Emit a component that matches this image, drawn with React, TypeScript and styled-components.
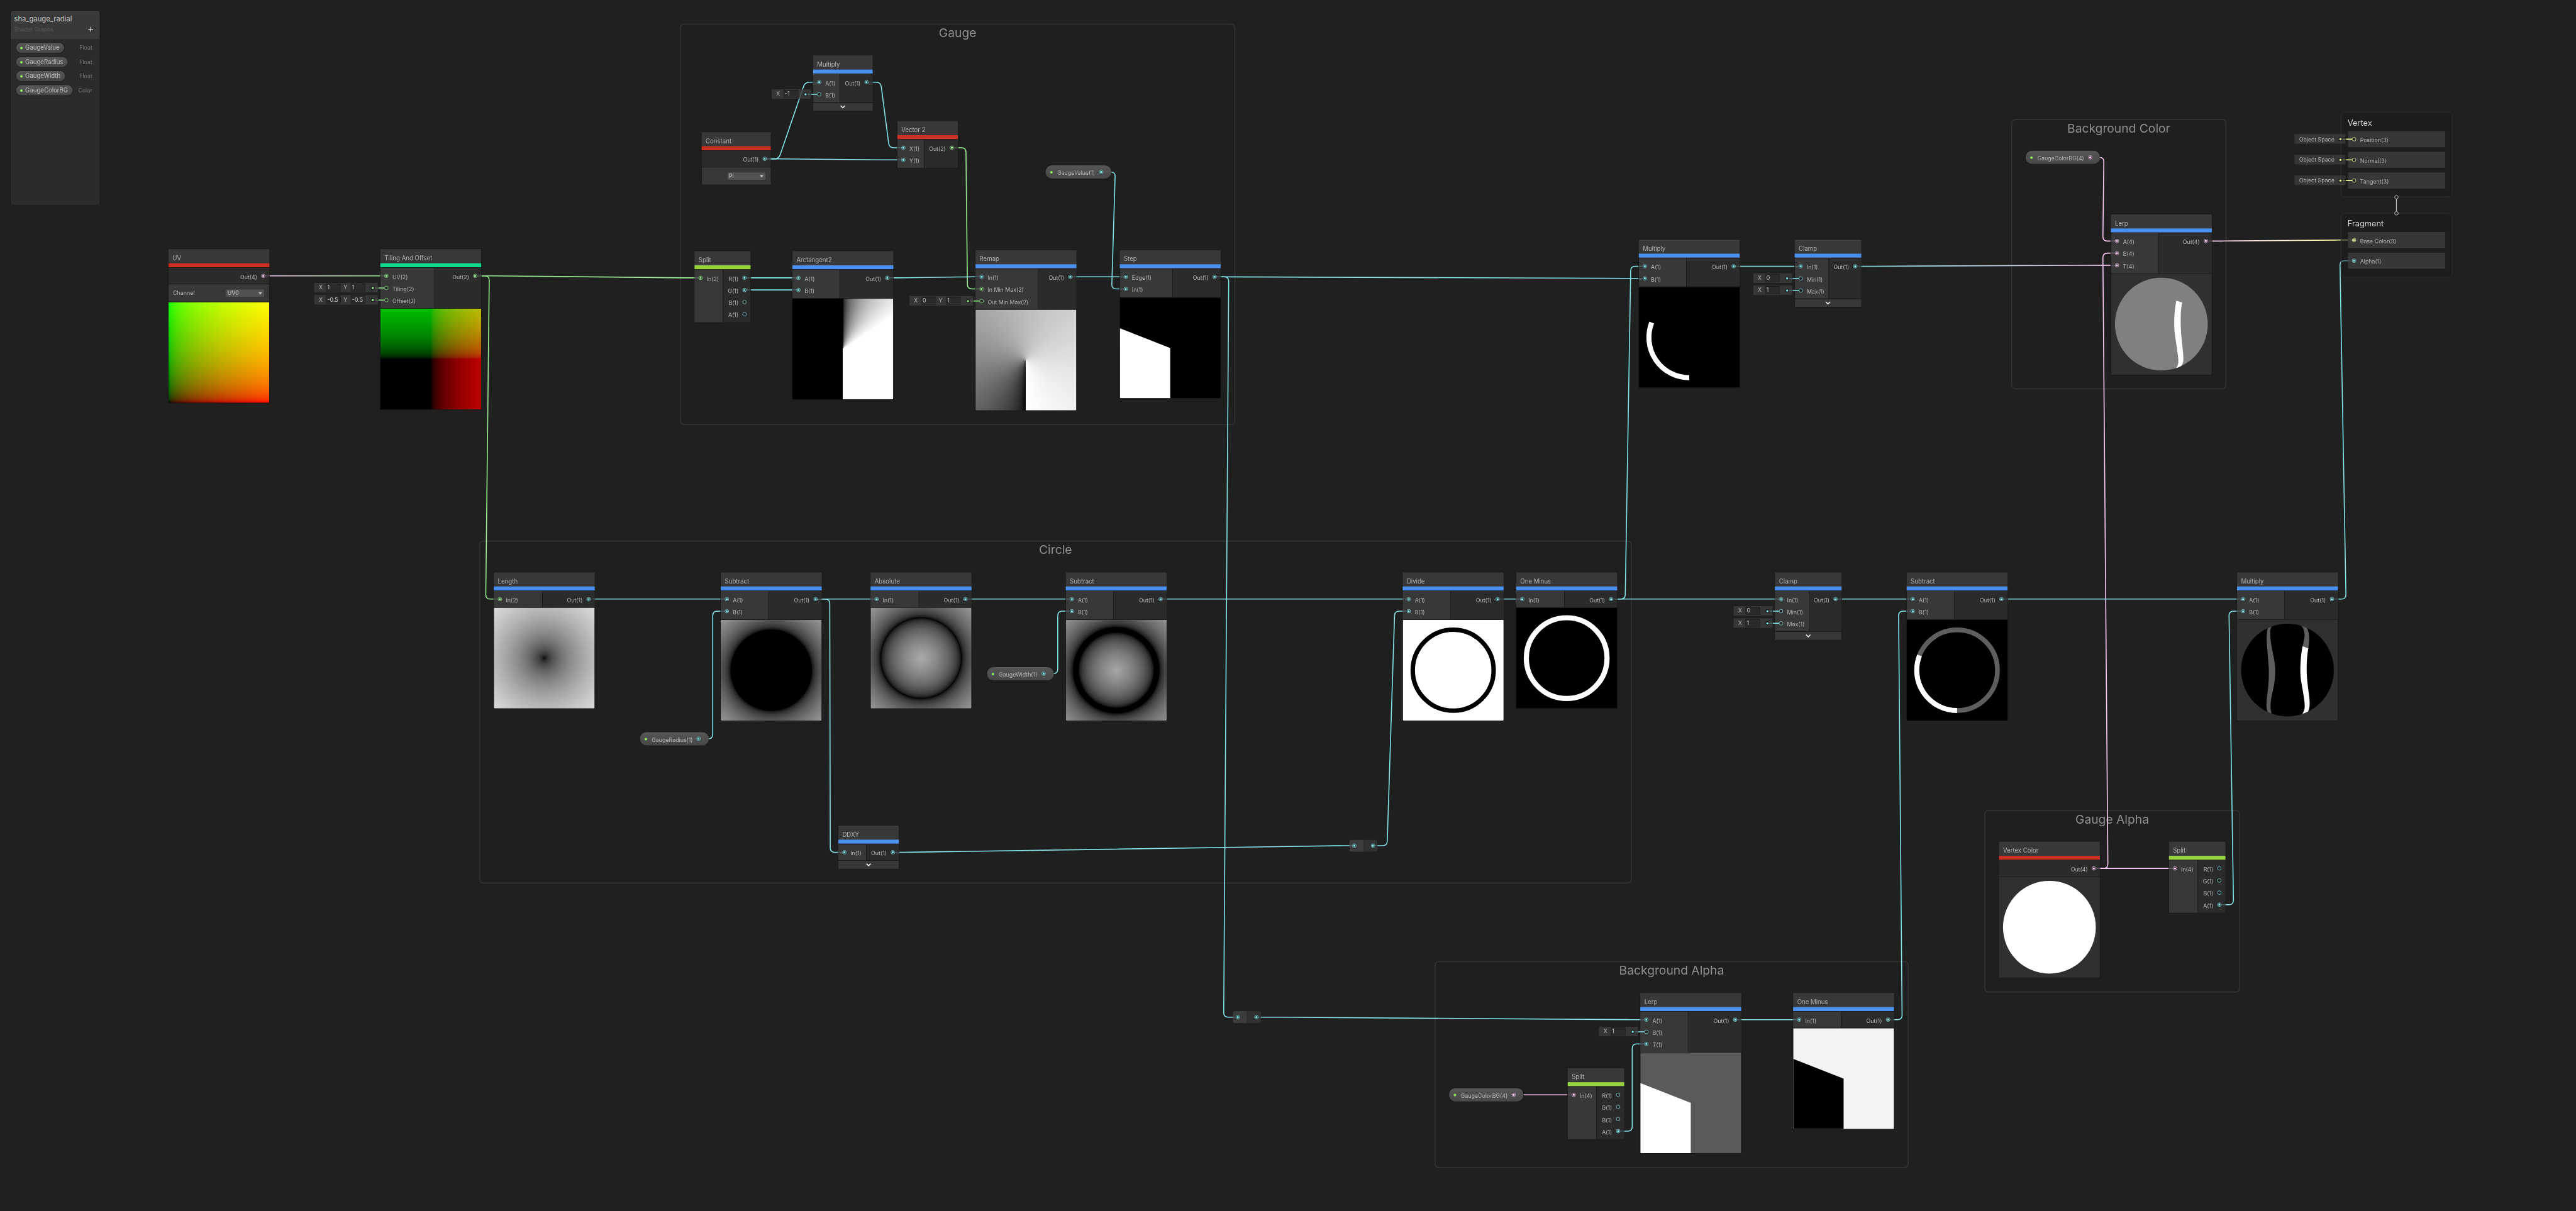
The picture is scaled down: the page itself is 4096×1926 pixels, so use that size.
import React from "react";
import styled, { createGlobalStyle } from "styled-components";

/* ------------------------------------------------------------------ */
/* Palette                                                             */
/* ------------------------------------------------------------------ */

const CYAN = "#84e4e7";
const GREEN = "#9aef92";
const PINK = "#fbcbf4";
const YELLOW = "#f6ff9a";

const BAR_BLUE = "#4a90f0";
const BAR_RED = "#cb3022";
const BAR_LIME = "#97d33d";
const BAR_TEAL = "#0cd88d";

const VIEW_ZOOM = 4096 / 5107;

/* ------------------------------------------------------------------ */
/* Shading helpers for the preview thumbnails                          */
/* ------------------------------------------------------------------ */

const encode = (v: number) => {
  const c = Math.min(1, Math.max(0, v));
  const s = c <= 0.0031308 ? c * 12.92 : 1.055 * Math.pow(c, 1 / 2.4) - 0.055;
  return Math.round(s * 255);
};

const grey = (v: number) => {
  const g = encode(v);
  return `rgb(${g},${g},${g})`;
};

const ramp = (steps: number, paint: (t: number) => string, place: (t: number) => string) =>
  Array.from({ length: steps + 1 }, (_, i) => {
    const t = Math.pow(i / steps, 1);
    return `${paint(t)} ${place(t)}`;
  }).join(",");

const percent = (t: number) => `${(t * 100).toFixed(3)}%`;

const radial = (shade: (length: number) => number) =>
  `radial-gradient(circle at center, ${ramp(
    140,
    (t) => grey(shade(t * 0.70711)),
    (t) => `${(t * 141.42).toFixed(2)}px`
  )})`;

const UV_FILL = `linear-gradient(to right, ${ramp(40, (t) => `rgb(${encode(t)},0,0)`, percent)}), linear-gradient(to top, ${ramp(
  40,
  (t) => `rgb(0,${encode(t)},0)`,
  percent
)})`;

const UV_CENTERED_FILL = `linear-gradient(to right, ${ramp(80, (t) => `rgb(${encode(t - 0.5)},0,0)`, percent)}), linear-gradient(to top, ${ramp(
  80,
  (t) => `rgb(0,${encode(t - 0.5)},0)`,
  percent
)})`;

const RAD = 180 / Math.PI;
const ATAN_FILL = `conic-gradient(from 0deg, ${ramp(40, (t) => grey(t), (t) => `${(t * RAD).toFixed(2)}deg`)}, #fff 180deg, #000 180deg, #000 360deg)`;
const REMAP_FILL = `conic-gradient(from 180deg, ${ramp(80, (t) => grey(t), (t) => `${(t * 360).toFixed(2)}deg`)})`;

const FILLS: Record<string, string> = {
  uv: UV_FILL,
  uvCentered: UV_CENTERED_FILL,
  atan: ATAN_FILL,
  remap: REMAP_FILL,
  length: radial((l) => l),
  minusRadius: radial((l) => l - 0.4),
  absolute: radial((l) => Math.abs(l - 0.4)),
  minusWidth: radial((l) => Math.abs(l - 0.4) - 0.025),
};

/* ------------------------------------------------------------------ */
/* Graph data                                                          */
/* ------------------------------------------------------------------ */

type Field = { axis: string; value: string };
type PortData = { label: string; color: string; open?: boolean; fields?: Field[] };
type NodeData = {
  x: number;
  y: number;
  w: number;
  title: string;
  bar: string;
  left?: number;
  ins?: PortData[];
  outs: PortData[];
  control?: { label?: string; value: string };
  preview?: string;
  collapsed?: boolean;
};

const c = (label: string): PortData => ({ label, color: CYAN });
const co = (label: string, fields?: Field[]): PortData => ({ label, color: CYAN, open: true, fields });
const g = (label: string): PortData => ({ label, color: GREEN });
const go = (label: string, fields?: Field[]): PortData => ({ label, color: GREEN, open: true, fields });
const p = (label: string): PortData => ({ label, color: PINK });
const X = (value: string): Field => ({ axis: "X", value });
const Y = (value: string): Field => ({ axis: "Y", value });

const NODES: NodeData[] = [
  { x: 334, y: 494, w: 200, title: "UV", bar: BAR_RED, outs: [p("Out(4)")], control: { label: "Channel", value: "UV0" }, preview: "uv" },
  {
    x: 754, y: 494, w: 200, title: "Tiling And Offset", bar: BAR_TEAL, left: 107,
    ins: [g("UV(2)"), go("Tiling(2)", [X("1"), Y("1")]), go("Offset(2)", [X("-0.5"), Y("-0.5")])],
    outs: [g("Out(2)")], preview: "uvCentered",
  },
  { x: 1612, y: 110, w: 118, title: "Multiply", bar: BAR_BLUE, left: 53, ins: [c("A(1)"), co("B(1)", [X("-1")])], outs: [c("Out(1)")], collapsed: true },
  { x: 1391, y: 262, w: 137, title: "Constant", bar: BAR_RED, outs: [c("Out(1)")], control: { value: "PI" } },
  { x: 1779, y: 240, w: 120, title: "Vector 2", bar: BAR_RED, left: 53, ins: [c("X(1)"), c("Y(1)")], outs: [g("Out(2)")] },
  { x: 1377, y: 498, w: 111, title: "Split", bar: BAR_LIME, left: 56, ins: [g("In(2)")], outs: [c("R(1)"), c("G(1)"), co("B(1)"), co("A(1)")] },
  { x: 1571, y: 498, w: 200, title: "Arctangent2", bar: BAR_BLUE, left: 94, ins: [c("A(1)"), c("B(1)")], outs: [c("Out(1)")], preview: "atan" },
  {
    x: 1934, y: 496, w: 200, title: "Remap", bar: BAR_BLUE, left: 124,
    ins: [c("In(1)"), g("In Min Max(2)"), go("Out Min Max(2)", [X("0"), Y("1")])], outs: [c("Out(1)")], preview: "remap",
  },
  { x: 2220, y: 496, w: 200, title: "Step", bar: BAR_BLUE, left: 104, ins: [c("Edge(1)"), c("In(1)")], outs: [c("Out(1)")], preview: "step" },
  { x: 3249, y: 475, w: 200, title: "Multiply", bar: BAR_BLUE, left: 94, ins: [c("A(1)"), c("B(1)")], outs: [c("Out(1)")], preview: "arc" },
  {
    x: 3558, y: 475, w: 132, title: "Clamp", bar: BAR_BLUE, left: 67,
    ins: [c("In(1)"), co("Min(1)", [X("0")]), co("Max(1)", [X("1")])], outs: [c("Out(1)")], collapsed: true,
  },
  { x: 4185, y: 425, w: 200, title: "Lerp", bar: BAR_BLUE, left: 94, ins: [p("A(4)"), p("B(4)"), p("T(4)")], outs: [p("Out(4)")], preview: "lerpSphere" },
  { x: 979, y: 1135, w: 200, title: "Length", bar: BAR_BLUE, left: 96, ins: [g("In(2)")], outs: [c("Out(1)")], preview: "length" },
  { x: 1429, y: 1135, w: 200, title: "Subtract", bar: BAR_BLUE, left: 94, ins: [c("A(1)"), c("B(1)")], outs: [c("Out(1)")], preview: "minusRadius" },
  { x: 1726, y: 1135, w: 200, title: "Absolute", bar: BAR_BLUE, left: 95, ins: [c("In(1)")], outs: [c("Out(1)")], preview: "absolute" },
  { x: 2113, y: 1135, w: 200, title: "Subtract", bar: BAR_BLUE, left: 94, ins: [c("A(1)"), c("B(1)")], outs: [c("Out(1)")], preview: "minusWidth" },
  { x: 1662, y: 1637, w: 120, title: "DDXY", bar: BAR_BLUE, left: 55, ins: [c("In(1)")], outs: [c("Out(1)")], collapsed: true },
  { x: 2781, y: 1135, w: 200, title: "Divide", bar: BAR_BLUE, left: 94, ins: [c("A(1)"), c("B(1)")], outs: [c("Out(1)")], preview: "ringDark" },
  { x: 3006, y: 1135, w: 200, title: "One Minus", bar: BAR_BLUE, left: 95, ins: [c("In(1)")], outs: [c("Out(1)")], preview: "ringLight" },
  {
    x: 3519, y: 1135, w: 132, title: "Clamp", bar: BAR_BLUE, left: 67,
    ins: [c("In(1)"), co("Min(1)", [X("0")]), co("Max(1)", [X("1")])], outs: [c("Out(1)")], collapsed: true,
  },
  { x: 3780, y: 1135, w: 200, title: "Subtract", bar: BAR_BLUE, left: 94, ins: [c("A(1)"), c("B(1)")], outs: [c("Out(1)")], preview: "ringGauge" },
  { x: 4435, y: 1135, w: 200, title: "Multiply", bar: BAR_BLUE, left: 94, ins: [c("A(1)"), c("B(1)")], outs: [c("Out(1)")], preview: "alphaSphere" },
  { x: 3963, y: 1669, w: 200, title: "Vertex Color", bar: BAR_RED, outs: [p("Out(4)")], preview: "whiteSphere" },
  { x: 4300, y: 1669, w: 112, title: "Split", bar: BAR_LIME, left: 57, ins: [p("In(4)")], outs: [co("R(1)"), co("G(1)"), co("B(1)"), c("A(1)")] },
  {
    x: 3252, y: 1969, w: 200, title: "Lerp", bar: BAR_BLUE, left: 94,
    ins: [c("A(1)"), co("B(1)", [X("1")]), c("T(1)")], outs: [c("Out(1)")], preview: "lerpStep",
  },
  { x: 3555, y: 1969, w: 200, title: "One Minus", bar: BAR_BLUE, left: 95, ins: [c("In(1)")], outs: [c("Out(1)")], preview: "inverseStep" },
  { x: 3108, y: 2118, w: 112, title: "Split", bar: BAR_LIME, left: 57, ins: [p("In(4)")], outs: [co("R(1)"), co("G(1)"), co("B(1)"), c("A(1)")] },
];

const GROUPS = [
  { x: 1348, y: 47, w: 1101, h: 796, title: "Gauge" },
  { x: 950, y: 1072, w: 2285, h: 680, title: "Circle" },
  { x: 3987, y: 236, w: 427, h: 536, title: "Background Color" },
  { x: 3934, y: 1606, w: 507, h: 362, title: "Gauge Alpha" },
  { x: 2844, y: 1906, w: 940, h: 410, title: "Background Alpha" },
];

const PROPERTIES = [
  { x: 2073, y: 328, w: 130, label: "GaugeValue(1)", color: CYAN },
  { x: 1269, y: 1452, w: 136, label: "GaugeRadius(1)", color: CYAN },
  { x: 1957, y: 1323, w: 132, label: "GaugeWidth(1)", color: CYAN },
  { x: 4016, y: 299, w: 147, label: "GaugeColorBG(4)", color: PINK },
  { x: 2873, y: 2158, w: 147, label: "GaugeColorBG(4)", color: PINK },
];

const REDIRECTS = [
  { x: 2675, y: 1665 },
  { x: 2444, y: 2005 },
];

type Point = [number, number];
type EdgeData = { from: Point; to: Point; color: string; end?: string };

const EDGES: EdgeData[] = [
  { from: [522, 547], to: [766, 547], color: PINK, end: GREEN },
  { from: [942, 547], to: [1389, 551], color: GREEN },
  { from: [942, 547], to: [991, 1188], color: GREEN },
  { from: [1516, 315], to: [1624, 163], color: CYAN },
  { from: [1516, 315], to: [1791, 317], color: CYAN },
  { from: [1718, 163], to: [1791, 293], color: CYAN },
  { from: [1887, 293], to: [1946, 573], color: GREEN },
  { from: [1476, 551], to: [1583, 551], color: CYAN },
  { from: [1476, 575], to: [1583, 575], color: CYAN },
  { from: [1759, 551], to: [1946, 549], color: CYAN },
  { from: [2122, 549], to: [2232, 549], color: CYAN },
  { from: [2183, 341], to: [2232, 573], color: CYAN },
  { from: [2408, 549], to: [3261, 552], color: CYAN },
  { from: [2408, 549], to: [2454, 2017], color: CYAN },
  { from: [3437, 528], to: [3570, 528], color: CYAN },
  { from: [3678, 528], to: [4197, 526], color: CYAN, end: PINK },
  { from: [4143, 312], to: [4197, 478], color: PINK },
  { from: [4151, 1722], to: [4197, 502], color: PINK },
  { from: [4373, 478], to: [4667, 476], color: PINK, end: YELLOW },
  { from: [1167, 1188], to: [1441, 1188], color: CYAN },
  { from: [1385, 1465], to: [1441, 1212], color: CYAN },
  { from: [1617, 1188], to: [1738, 1188], color: CYAN },
  { from: [1617, 1188], to: [1674, 1690], color: CYAN },
  { from: [1914, 1188], to: [2125, 1188], color: CYAN },
  { from: [2069, 1336], to: [2125, 1212], color: CYAN },
  { from: [2301, 1188], to: [2793, 1188], color: CYAN },
  { from: [1770, 1690], to: [2685, 1677], color: CYAN },
  { from: [2722, 1677], to: [2793, 1212], color: CYAN },
  { from: [2969, 1188], to: [3018, 1188], color: CYAN },
  { from: [3194, 1188], to: [3261, 528], color: CYAN },
  { from: [3194, 1188], to: [3531, 1188], color: CYAN },
  { from: [3639, 1188], to: [3792, 1188], color: CYAN },
  { from: [3968, 1188], to: [4447, 1188], color: CYAN },
  { from: [4623, 1188], to: [4667, 517], color: CYAN },
  { from: [4151, 1722], to: [4312, 1722], color: PINK },
  { from: [4400, 1794], to: [4447, 1212], color: CYAN },
  { from: [2491, 2017], to: [3264, 2022], color: CYAN },
  { from: [3440, 2022], to: [3567, 2022], color: CYAN },
  { from: [3743, 2022], to: [3792, 1212], color: CYAN },
  { from: [3208, 2243], to: [3264, 2070], color: CYAN },
  { from: [3000, 2171], to: [3120, 2171], color: PINK },
];

const BLACKBOARD = [
  { name: "GaugeValue", type: "Float" },
  { name: "GaugeRadius", type: "Float" },
  { name: "GaugeWidth", type: "Float" },
  { name: "GaugeColorBG", type: "Color" },
];

/* ------------------------------------------------------------------ */
/* Styled parts                                                        */
/* ------------------------------------------------------------------ */

const GlobalStyle = createGlobalStyle`
  html, body { margin: 0; padding: 0; background: #202020; }
  * { box-sizing: border-box; }
`;

const Viewport = styled.main`
  position: relative;
  width: 4096px;
  height: 1926px;
  overflow: hidden;
  background: #202020;
  font-family: Inter, "Liberation Sans", sans-serif;
  font-size: 11px;
  color: #b6b6b6;
`;

const Canvas = styled.div`
  position: relative;
  width: 5107px;
  height: 2401px;
  transform: scale(${VIEW_ZOOM});
  transform-origin: 0 0;
`;

const Group = styled.section<{ $x: number; $y: number; $w: number; $h: number }>`
  position: absolute;
  left: ${(q) => q.$x}px;
  top: ${(q) => q.$y}px;
  width: ${(q) => q.$w}px;
  height: ${(q) => q.$h}px;
  border: 2px solid #333333;
  border-radius: 8px;
  background: #1f1f1f;
  padding-top: 2.6px;
  font-size: 24px;
  line-height: 28px;
  text-align: center;
  color: #8f8f8f;
`;

const EdgeLayer = styled.svg`
  position: absolute;
  left: 0;
  top: 0;
  pointer-events: none;
`;

const NodeBox = styled.article<{ $x: number; $y: number; $w: number }>`
  position: absolute;
  left: ${(q) => q.$x}px;
  top: ${(q) => q.$y}px;
  width: ${(q) => q.$w}px;
  display: flex;
  flex-direction: column;
  box-shadow: 0 0 0 1px rgba(25, 25, 25, 0.8);
`;

const NodeTitle = styled.header<{ $bar: string }>`
  height: 36px;
  padding: 11px 8px 0;
  background: rgba(63, 63, 63, 0.8);
  border-bottom: 8px solid ${(q) => q.$bar};
  font-size: 12px;
  line-height: 14px;
  white-space: nowrap;
  color: #b2b2b2;
`;

const Ports = styled.div`
  display: flex;
  border-top: 1px solid rgba(25, 25, 25, 0.8);
`;

const Inputs = styled.div<{ $w: number }>`
  flex: none;
  width: ${(q) => q.$w + 1}px;
  padding: 4px 0;
  background: rgba(63, 63, 63, 0.8);
  background-clip: padding-box;
  border-right: 1px solid rgba(25, 25, 25, 0.8);
`;

const Outputs = styled.div`
  flex: 1;
  padding: 4px 0;
  background: rgba(46, 46, 46, 0.8);
`;

const PortRow = styled.div<{ $out?: boolean }>`
  position: relative;
  display: flex;
  flex-direction: ${(q) => (q.$out ? "row-reverse" : "row")};
  align-items: center;
  gap: 7px;
  height: 24px;
  padding: 0 7px;
`;

const PortLabel = styled.span`
  padding-top: 4px;
  line-height: 13px;
  white-space: nowrap;
`;

const PortGlyph = styled.svg`
  flex: none;
  width: 10px;
  height: 10px;
  overflow: visible;
`;

const FieldAnchor = styled.div`
  position: absolute;
  right: calc(100% + 5px);
  top: 2px;
`;

const FieldBox = styled.div`
  display: flex;
  align-items: center;
  gap: 5px;
  height: 19px;
  padding: 0 24px 0 9px;
  background: rgba(60, 60, 60, 0.8);
`;

const FieldCell = styled.label`
  display: flex;
  align-items: center;
  line-height: 17px;
`;

const FieldAxis = styled.span`
  width: 14px;
`;

const FieldInput = styled.span`
  width: 30px;
  height: 17px;
  padding-left: 2px;
  border: 1px solid #212121;
  border-top-color: #0d0d0d;
  border-radius: 3px;
  background: rgba(42, 42, 42, 0.9);
  line-height: 15px;
  color: #c8c8c8;
`;

const FieldWire = styled.svg`
  position: absolute;
  left: calc(100% - 15px);
  top: 4.5px;
  width: 30px;
  height: 10px;
`;

const ControlRow = styled.div`
  display: flex;
  align-items: center;
  justify-content: space-between;
  height: 35px;
  padding: 0 9px;
  border-top: 1px solid rgba(25, 25, 25, 0.8);
  background: rgba(63, 63, 63, 0.8);
  background-clip: padding-box;
`;

const Dropdown = styled.span`
  display: flex;
  align-items: center;
  justify-content: space-between;
  width: 78px;
  height: 17px;
  margin-left: auto;
  padding: 0 4px 0 3px;
  border: 1px solid #303030;
  border-bottom-color: #242424;
  border-radius: 3px;
  background: #515151;
  color: #d8d8d8;
  line-height: 15px;
`;

const PreviewBox = styled.div<{ $fill?: string }>`
  height: 201px;
  border-top: 1px solid rgba(25, 25, 25, 0.8);
  border-radius: 0 0 2px 2px;
  overflow: hidden;
  background: ${(q) => q.$fill ?? "#303030"};
  background-blend-mode: screen;
  background-origin: content-box;
  background-clip: padding-box;
`;

const PreviewDrawing = styled.svg`
  display: block;
  width: 100%;
  height: 200px;
`;

const CollapseBar = styled.div`
  display: flex;
  align-items: center;
  justify-content: center;
  height: 17px;
  border-top: 1px solid rgba(25, 25, 25, 0.8);
  background: rgba(63, 63, 63, 0.8);
  background-clip: padding-box;
`;

const PropertyPill = styled.div<{ $x: number; $y: number; $w: number }>`
  position: absolute;
  left: ${(q) => q.$x}px;
  top: ${(q) => q.$y}px;
  width: ${(q) => q.$w}px;
  height: 26px;
  display: flex;
  align-items: center;
  gap: 7px;
  padding: 0 15px 0 9px;
  border-radius: 12px;
  background: linear-gradient(#565656, #474747);
  box-shadow: 0 0 0 1px rgba(25, 25, 25, 0.6);
`;

const PillLabel = styled.span`
  flex: 1;
  padding: 4px 0 0 2px;
  line-height: 13px;
  white-space: nowrap;
`;

const ExposedDot = styled.i`
  flex: none;
  width: 5px;
  height: 5px;
  border-radius: 50%;
  background: #92f060;
`;

const RedirectBox = styled.div<{ $x: number; $y: number }>`
  position: absolute;
  left: ${(q) => q.$x}px;
  top: ${(q) => q.$y}px;
  display: flex;
  width: 56px;
  height: 24px;
  border-radius: 5px;
  overflow: hidden;
`;

const RedirectHalf = styled.div<{ $out?: boolean }>`
  display: flex;
  flex: 1;
  align-items: center;
  justify-content: ${(q) => (q.$out ? "flex-end" : "flex-start")};
  padding: 0 4px 0 5px;
  background: ${(q) => (q.$out ? "rgba(54,54,54,.8)" : "rgba(68,68,68,.8)")};
  border-right: ${(q) => (q.$out ? "none" : "1px solid rgba(35,35,35,.8)")};
`;

const ContextBox = styled.section<{ $y: number; $h: number }>`
  position: absolute;
  left: 4641px;
  top: ${(q) => q.$y}px;
  width: 221px;
  height: ${(q) => q.$h}px;
  padding: 12px 13px 0;
  display: flex;
  flex-direction: column;
  gap: 9px;
  border: 1px solid #343434;
  border-radius: 7px;
  background: rgba(26, 26, 26, 0.5);
`;

const ContextTitle = styled.h2`
  margin: 0 0 -1px -1px;
  font-size: 16px;
  font-weight: 400;
  line-height: 17px;
  color: #d6d6d6;
`;

const Block = styled.div`
  height: 32px;
  padding: 4px 0;
  background: rgba(63, 63, 63, 0.8);
  box-shadow: 0 0 0 1px rgba(25, 25, 25, 0.6);
`;

const SpaceBox = styled(FieldBox)`
  width: 101px;
  padding: 0 0 0 9px;
`;

const ContextLink = styled.svg`
  position: absolute;
  left: 4744px;
  top: 384px;
  width: 14px;
  height: 46px;
`;

const Panel = styled.aside`
  position: absolute;
  left: 21px;
  top: 21px;
  width: 177px;
  height: 386px;
  display: flex;
  flex-direction: column;
  border-radius: 4px;
  overflow: hidden;
  background: #2b2b2b;
  outline: 1px solid #191919;
`;

const PanelHeader = styled.header`
  display: flex;
  justify-content: space-between;
  height: 58px;
  padding: 7px 13px 0 7px;
  background: #393939;
  border-bottom: 1px solid #212121;
`;

const PanelTitle = styled.div`
  font-size: 14px;
  line-height: 18px;
  color: #c2c2c2;
`;

const PanelSubtitle = styled.div`
  padding-top: 5px;
  font-size: 11px;
  line-height: 14px;
  color: #575757;
`;

const AddButton = styled.svg`
  flex: none;
  width: 10px;
  height: 10px;
  margin-top: 25px;
`;

const PanelList = styled.ul`
  margin: 0;
  padding: 6px 15px 0 11px;
  list-style: none;
`;

const PanelRow = styled.li`
  display: flex;
  align-items: center;
  justify-content: space-between;
  height: 20px;
  margin-bottom: 8px;
  color: #747474;
`;

const PanelPill = styled.span`
  display: flex;
  align-items: center;
  gap: 5px;
  height: 20px;
  padding: 0 9px 0 8px;
  border-radius: 10px;
  background: linear-gradient(#575757, #464646);
  box-shadow: 0 0 0 1px #1b1b1b;
  font-size: 12px;
  line-height: 18px;
  color: #bfbfbf;
`;

/* ------------------------------------------------------------------ */
/* Drawings                                                            */
/* ------------------------------------------------------------------ */

const edgePath = ([x1, y1]: Point, [x2, y2]: Point) => {
  if (y1 === y2) return `M${x1} ${y1}L${x2} ${y2}`;
  const a: Point = [x1 + 28, y1];
  const b: Point = [x2 - 28, y2];
  const dx = b[0] - a[0];
  const dy = b[1] - a[1];
  const len = Math.hypot(dx, dy);
  const r = Math.min(9, len / 2);
  const ux = (dx / len) * r;
  const uy = (dy / len) * r;
  return `M${x1} ${y1}L${a[0] - r} ${y1}Q${a[0]} ${a[1]} ${a[0] + ux} ${a[1] + uy}L${b[0] - ux} ${b[1] - uy}Q${b[0]} ${b[1]} ${b[0] + r} ${y2}L${x2} ${y2}`;
};

const Edges = () => (
  <EdgeLayer width={5107} height={2401} fill="none" strokeWidth={2}>
    <defs>
      {EDGES.map((e, i) =>
        e.end ? (
          <linearGradient key={i} id={`edge${i}`} gradientUnits="userSpaceOnUse" x1={e.from[0]} y1={0} x2={e.to[0]} y2={0}>
            <stop offset="0" stopColor={e.color} />
            <stop offset="1" stopColor={e.end} />
          </linearGradient>
        ) : null
      )}
    </defs>
    {EDGES.map((e, i) => (
      <path key={i} d={edgePath(e.from, e.to)} stroke={e.end ? `url(#edge${i})` : e.color} />
    ))}
  </EdgeLayer>
);

const PortDot = ({ color, open }: { color: string; open?: boolean }) => (
  <PortGlyph viewBox="0 0 10 10">
    <circle cx="5" cy="5" r="3.6" fill="#212121" stroke={color} strokeOpacity="0.85" strokeWidth="1.1" />
    {!open && <circle cx="5" cy="5" r="2.1" fill={color} />}
  </PortGlyph>
);

const Wire = ({ color }: { color: string }) => (
  <FieldWire viewBox="0 0 30 10">
    <circle cx="5" cy="5" r="4" fill="#212121" />
    <circle cx="5" cy="5" r="2.1" fill={color} />
    <path d="M9 5H15" stroke={color} strokeOpacity="0.3" strokeWidth="2" />
    <path d="M16 5H28.2" stroke={color} strokeWidth="2" />
  </FieldWire>
);

const Chevron = () => (
  <svg width="12" height="8" viewBox="0 0 12 8" fill="none">
    <path d="M1.8 1.6L6 5.8L10.2 1.6" stroke="#efefef" strokeWidth="2" />
  </svg>
);

const STEP_SHAPE = "M0 60.7L100 100V200H0Z";
const GAUGE_ARC = "M100 180A80 80 0 0 1 25.57 70.68";

const LERP_BAND =
  "M129.6 53.2L141.2 56.7C139.8 64 138.9 71 138.6 78C138 92 138.2 108 139.5 122C140.6 135 142.2 146 142.9 155.4C143.6 164 143.8 170 143.3 174C142.6 180 138 188 126 190C130 187 132 184 132.8 180C134 175 133.8 170 133 164C132.2 155 130 142 127.6 126C125.4 112 124.9 98 125.8 84C126.3 74 128 62 129.6 53.2Z";
const ALPHA_WHITE =
  "M129.8 52.4L141.4 56.6C140 64 139.2 71 138.6 79C137.8 92 137.8 104 138.8 117C140 131 142.2 144 143.3 154C144.2 163 144.3 170 143.2 175C142 182 138 189 126 191C130 187 133 182 133.9 176C134.6 170 133.8 163 133 157C131.6 146 129 134 126.8 120C125.2 108 125.2 96 126 84C126.6 74 128 62 129.8 52.4Z";
const ALPHA_TOP =
  "M124 10L136 12C139.4 16 141.6 23 142.7 30C143.7 38 142.8 47 141.4 56.6L129.8 52.4C131.8 46 133.4 39 133.8 32C134.2 24 132 16 127 12Z";
const ALPHA_LEFT =
  "M70 12C67 15 65.8 19 65.8 25C65.8 35 67 46 69 56C71 67 73.6 77 74.8 87C76.2 98 75.8 108 74.8 119C73.4 133 69.6 145 67.6 157C66 168 65.4 178 69.4 188L63 187C59 181 58 174 58.3 167C58.6 156 60.6 145 61.8 133C63 120 63.4 108 62.8 95C62 80 60.2 64 59.2 48C58.6 38 58.6 28 60.2 20C61 15 64 12 70 10Z";

const drawings: Record<string, React.ReactNode> = {
  step: (
    <>
      <rect width="200" height="200" fill="#000" />
      <path d={STEP_SHAPE} fill="#fff" />
    </>
  ),
  lerpStep: (
    <>
      <rect width="200" height="200" fill="#5a5a5a" />
      <path d={STEP_SHAPE} fill="#fff" />
    </>
  ),
  inverseStep: (
    <>
      <rect width="200" height="200" fill="#f3f3f3" />
      <path d={STEP_SHAPE} fill="#000" />
    </>
  ),
  arc: (
    <>
      <rect width="200" height="200" fill="#000" />
      <path d={GAUGE_ARC} fill="none" stroke="#fff" strokeWidth="10" />
    </>
  ),
  ringDark: (
    <>
      <rect width="200" height="200" fill="#fff" />
      <circle cx="100" cy="100" r="80.2" fill="none" stroke="#000" strokeWidth="8.8" />
    </>
  ),
  ringLight: (
    <>
      <rect width="200" height="200" fill="#000" />
      <circle cx="100" cy="100" r="80" fill="none" stroke="#fff" strokeWidth="10.2" />
    </>
  ),
  ringGauge: (
    <>
      <rect width="200" height="200" fill="#000" />
      <circle cx="100" cy="100" r="80" fill="none" stroke="#5e5e5e" strokeWidth="9.4" />
      <path d={GAUGE_ARC} fill="none" stroke="#fff" strokeWidth="10" />
    </>
  ),
  whiteSphere: <circle cx="100" cy="99.7" r="92" fill="#fff" />,
  lerpSphere: (
    <>
      <clipPath id="lerpBall">
        <circle cx="100" cy="99.7" r="92" />
      </clipPath>
      <g clipPath="url(#lerpBall)">
        <rect width="200" height="200" fill="#808080" />
        <path d={LERP_BAND} fill="#fff" />
      </g>
    </>
  ),
  alphaSphere: (
    <>
      <clipPath id="alphaBall">
        <circle cx="100" cy="99.7" r="92" />
      </clipPath>
      <g clipPath="url(#alphaBall)">
        <rect width="200" height="200" fill="#000" />
        <path d={ALPHA_LEFT} fill="#5e5e5e" />
        <path d={ALPHA_TOP} fill="#5e5e5e" />
        <path d={ALPHA_WHITE} fill="#fff" />
      </g>
    </>
  ),
};

/* ------------------------------------------------------------------ */
/* Components                                                          */
/* ------------------------------------------------------------------ */

const Port = ({ port, out }: { port: PortData; out?: boolean }) => (
  <PortRow $out={out}>
    <PortDot color={port.color} open={port.open} />
    <PortLabel>{port.label}</PortLabel>
    {port.fields && (
      <FieldAnchor>
        <FieldBox>
          {port.fields.map((f) => (
            <FieldCell key={f.axis}>
              <FieldAxis>{f.axis}</FieldAxis>
              <FieldInput>{f.value}</FieldInput>
            </FieldCell>
          ))}
        </FieldBox>
        <Wire color={port.color} />
      </FieldAnchor>
    )}
  </PortRow>
);

const Preview = ({ kind }: { kind: string }) => (
  <PreviewBox $fill={FILLS[kind]}>{drawings[kind] && <PreviewDrawing viewBox="0 0 200 200">{drawings[kind]}</PreviewDrawing>}</PreviewBox>
);

const Node = ({ node }: { node: NodeData }) => (
  <NodeBox $x={node.x} $y={node.y} $w={node.w}>
    <NodeTitle $bar={node.bar}>{node.title}</NodeTitle>
    <Ports>
      {node.ins && (
        <Inputs $w={node.left ?? 94}>
          {node.ins.map((port) => (
            <Port key={port.label} port={port} />
          ))}
        </Inputs>
      )}
      <Outputs>
        {node.outs.map((port) => (
          <Port key={port.label} port={port} out />
        ))}
      </Outputs>
    </Ports>
    {node.control && (
      <ControlRow>
        {node.control.label && <span>{node.control.label}</span>}
        <Dropdown>
          {node.control.value}
          <svg width="8" height="5" viewBox="0 0 8 5">
            <path d="M0 0H8L4 5Z" fill="#c4c4c4" />
          </svg>
        </Dropdown>
      </ControlRow>
    )}
    {node.preview && <Preview kind={node.preview} />}
    {node.collapsed && (
      <CollapseBar>
        <Chevron />
      </CollapseBar>
    )}
  </NodeBox>
);

const BlockPort = ({ port, space }: { port: PortData; space?: boolean }) => (
  <Block>
    <PortRow>
      <PortDot color={port.color} open={port.open} />
      <PortLabel>{port.label}</PortLabel>
      {space && (
        <FieldAnchor>
          <SpaceBox>Object Space</SpaceBox>
          <Wire color={port.color} />
        </FieldAnchor>
      )}
    </PortRow>
  </Block>
);

const Blackboard = () => (
  <Panel>
    <PanelHeader>
      <div>
        <PanelTitle>sha_gauge_radial</PanelTitle>
        <PanelSubtitle>Shader Graphs</PanelSubtitle>
      </div>
      <AddButton viewBox="0 0 10 10">
        <path d="M5 0V10M0 5H10" stroke="#f2f2f2" strokeWidth="1.5" />
      </AddButton>
    </PanelHeader>
    <PanelList>
      {BLACKBOARD.map((item) => (
        <PanelRow key={item.name}>
          <PanelPill>
            <ExposedDot />
            {item.name}
          </PanelPill>
          {item.type}
        </PanelRow>
      ))}
    </PanelList>
  </Panel>
);

export default function App() {
  return (
    <Viewport>
      <GlobalStyle />
      <Canvas>
        {GROUPS.map((q) => (
          <Group key={q.title} $x={q.x} $y={q.y} $w={q.w} $h={q.h}>
            {q.title}
          </Group>
        ))}
        <Edges />
        {PROPERTIES.map((q, i) => (
          <PropertyPill key={i} $x={q.x} $y={q.y} $w={q.w}>
            <ExposedDot />
            <PillLabel>{q.label}</PillLabel>
            <PortDot color={q.color} />
          </PropertyPill>
        ))}
        {REDIRECTS.map((q, i) => (
          <RedirectBox key={i} $x={q.x} $y={q.y}>
            <RedirectHalf>
              <PortDot color={CYAN} />
            </RedirectHalf>
            <RedirectHalf $out>
              <PortDot color={CYAN} />
            </RedirectHalf>
          </RedirectBox>
        ))}
        {NODES.map((node, i) => (
          <Node key={i} node={node} />
        ))}
        <ContextBox $y={222} $h={169}>
          <ContextTitle>Vertex</ContextTitle>
          <BlockPort space port={{ label: "Position(3)", color: YELLOW, open: true }} />
          <BlockPort space port={{ label: "Normal(3)", color: YELLOW, open: true }} />
          <BlockPort space port={{ label: "Tangent(3)", color: YELLOW, open: true }} />
        </ContextBox>
        <ContextBox $y={422} $h={128}>
          <ContextTitle>Fragment</ContextTitle>
          <BlockPort port={{ label: "Base Color(3)", color: YELLOW }} />
          <BlockPort port={{ label: "Alpha(1)", color: CYAN }} />
        </ContextBox>
        <ContextLink viewBox="0 0 14 46" fill="#202020" stroke="#c8c8c8">
          <path d="M7 10.5V35.5" strokeWidth="1.6" />
          <circle cx="7" cy="7" r="3.5" strokeWidth="1.2" />
          <circle cx="7" cy="39" r="3.5" strokeWidth="1.2" />
        </ContextLink>
        <Blackboard />
      </Canvas>
    </Viewport>
  );
}
